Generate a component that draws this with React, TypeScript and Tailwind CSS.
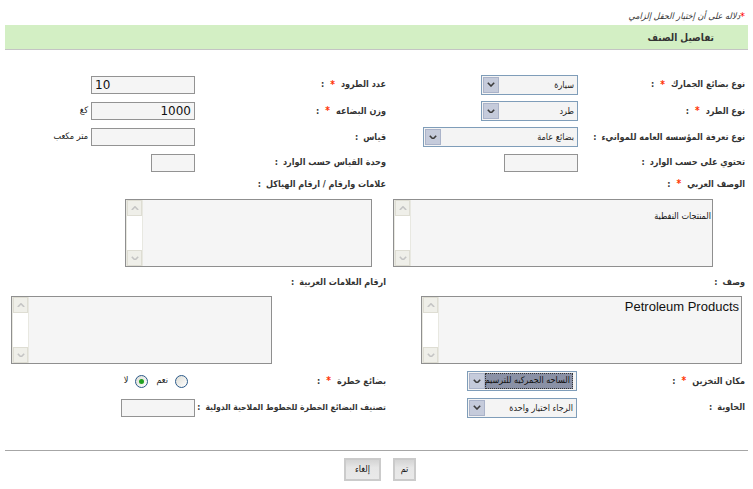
import React from "react";

const F = { fontFamily: '"DejaVu Sans", "Noto Sans", sans-serif' };
const FC = { fontFamily: '"DejaVu Sans Condensed", "DejaVu Sans", sans-serif' };

function Chevron({ up = false, color = "#333", w = 8 }: { up?: boolean; color?: string; w?: number }) {
  return (
    <svg width={w} height={w * 0.6} viewBox="0 0 10 6">
      <path d={up ? "M1 5 L5 1 L9 5" : "M1 1 L5 5 L9 1"} fill="none" stroke={color} strokeWidth={2} />
    </svg>
  );
}

function Label({ text, req = false, small = false }: { text: string; req?: boolean; small?: boolean }) {
  return (
    <div className={`flex items-center ${small ? "text-[8.5px]" : "text-[9px]"} font-bold text-[#333] whitespace-nowrap leading-none`} style={FC}>
      <span>{text}</span>
      {req && <span className="text-[#ff3300] text-[10px] mr-[6px]">*</span>}
      <span className={req ? "mr-[6px]" : "mr-[5px]"}>:</span>
    </div>
  );
}

function Select({ w, text, focus = false }: { w: string; text: string; focus?: boolean }) {
  return (
    <div className={`${w} h-[20px] border border-[#7f9db9] bg-[#f4f4f4] flex items-stretch p-px`}>
      <div className="flex-1 flex items-center justify-start pr-[2px] overflow-hidden">
        {focus ? (
          <span className="h-full w-full flex items-center bg-[#8a91a6] border border-dotted border-[#333] text-[9px] text-[#111] pr-[2px] whitespace-nowrap" style={FC}>{text}</span>
        ) : (
          <span className="text-[9px] text-[#222] whitespace-nowrap pt-[2px]" style={FC}>{text}</span>
        )}
      </div>
      <div className="w-[16px] bg-[#c5cbdb] border border-[#aab3c9] flex items-center justify-center">
        <Chevron color="#3c3c3c" w={8} />
      </div>
    </div>
  );
}

function Input({ w, value, align = "right" }: { w: string; value?: string; align?: "left" | "right" }) {
  return (
    <div
      dir="ltr"
      className={`${w} h-[18px] border border-[#939393] bg-[#f5f5f5] flex items-center px-[3px] text-[12px] text-[#111] ${align === "left" ? "justify-start" : "justify-end"}`}
    >
      {value}
    </div>
  );
}

function TextArea({ w, children, mr }: { w: string; children?: React.ReactNode; mr: string }) {
  return (
    <div className={`${w} ${mr} h-[68px] border border-[#8f8f8f] bg-[#f5f5f5] flex`}>
      <div className="flex-1 pr-[1px] pt-[2px] overflow-hidden">{children}</div>
      <div className="w-[17px] h-full bg-white border-x border-[#e8e8e1] flex flex-col justify-between">
        <div className="h-[16px] bg-[#efefe9] border border-[#deddd3] flex items-center justify-center">
          <Chevron up color="#c4c4c4" w={8} />
        </div>
        <div className="h-[16px] bg-[#efefe9] border border-[#deddd3] flex items-center justify-center">
          <Chevron color="#c4c4c4" w={8} />
        </div>
      </div>
    </div>
  );
}

function Radio({ checked = false }: { checked?: boolean }) {
  return (
    <span className="w-[13px] h-[13px] rounded-full border border-[#2b5a8a] bg-[linear-gradient(135deg,#dcdcd5,#ffffff)] flex items-center justify-center">
      {checked && <span className="w-[5px] h-[5px] rounded-full bg-[#21a121]" />}
    </span>
  );
}

export default function App() {
  return (
    <div className="w-[753px] h-[489px] bg-white overflow-hidden text-[#333]" style={F}>
      <div dir="rtl" className="h-[25px] pr-[8px] flex items-center pt-[9px]" style={FC}>
        <span className="text-[#ff0000] text-[11px] italic">*</span>
        <span className="text-[9px] italic text-[#333]">دلاله على أن إختيار الحقل إلزامي</span>
      </div>
      <div dir="rtl" className="mx-[5px] h-[24px] bg-[#d3efc4] flex items-center pr-[34px]">
        <span className="text-[10px] font-bold text-[#333]" style={FC}>تفاصيل الصنف</span>
      </div>
      <div className="mx-[5px] h-px bg-[#c4c4c4]" />

      <div dir="rtl" className="mt-[21px] pr-[8px] grid grid-cols-[167px_192px_191px_195px]">
        {/* row 1 */}
        <div className="h-[27px] flex items-center"><Label text="نوع بضائع الجمارك" req /></div>
        <div className="h-[27px] flex items-center"><Select w="w-[97px]" text="سيارة" /></div>
        <div className="h-[27px] flex items-center"><Label text="عدد الطرود" req /></div>
        <div className="h-[27px] flex items-center"><Input w="w-[104px]" value="10" align="left" /></div>

        {/* row 2 */}
        <div className="h-[26px] flex items-center"><Label text="نوع الطرد" req /></div>
        <div className="h-[26px] flex items-center"><Select w="w-[97px]" text="طرد" /></div>
        <div className="h-[26px] flex items-center"><Label text="وزن البضاعه" req /></div>
        <div className="h-[26px] flex items-center gap-[3px]">
          <Input w="w-[104px]" value="1000" />
          <span className="text-[9px] text-[#222]" style={FC}>كغ</span>
        </div>

        {/* row 3 */}
        <div className="h-[26px] flex items-center"><Label text="نوع تعرفة المؤسسه العامه للموانيء" /></div>
        <div className="h-[26px] flex items-center"><Select w="w-[155px]" text="بضائع عامة" /></div>
        <div className="h-[26px] flex items-center"><Label text="قياس" /></div>
        <div className="h-[26px] flex items-center gap-[3px]">
          <Input w="w-[104px]" />
          <span className="text-[9px] text-[#222] whitespace-nowrap" style={FC}>متر مكعب</span>
        </div>

        {/* row 4 */}
        <div className="h-[25px] flex items-center"><Label text="تحتوي على حسب الوارد" /></div>
        <div className="h-[25px] flex items-center"><Input w="w-[74px]" /></div>
        <div className="h-[25px] flex items-center"><Label text="وحدة القياس حسب الوارد" /></div>
        <div className="h-[25px] flex items-center"><Input w="w-[44px]" /></div>

        {/* row 5 labels */}
        <div className="col-span-2 h-[18px] flex items-center"><Label text="الوصف العربي" req /></div>
        <div className="col-span-2 h-[18px] flex items-center"><Label text="علامات وارقام / ارقام الهياكل" /></div>

        {/* row 6 textareas */}
        <div className="col-span-2 mt-[6px] flex">
          <TextArea w="w-[320px]" mr="mr-[32px]">
            <span className="text-[9px] text-[#111]" style={FC}>المنتجات النفطية</span>
          </TextArea>
        </div>
        <div className="col-span-2 mt-[6px] flex">
          <TextArea w="w-[247px]" mr="mr-[14px]" />
        </div>

        {/* row 7 labels */}
        <div className="col-span-2 mt-[6px] h-[18px] flex items-center"><Label text="وصف" /></div>
        <div className="col-span-2 mt-[6px] h-[18px] flex items-center"><Label text="ارقام العلامات العربية" /></div>

        {/* row 8 textareas */}
        <div className="col-span-2 mt-[5px] flex">
          <TextArea w="w-[321px]" mr="mr-[3px]">
            <div dir="ltr" className="text-right pr-[1px] text-[13px] text-[#111] leading-[16px]" style={{ fontFamily: '"Liberation Sans", sans-serif' }}>
              Petroleum Products
            </div>
          </TextArea>
        </div>
        <div className="col-span-2 mt-[5px] flex">
          <TextArea w="w-[261px]" mr="mr-[114px]" />
        </div>

        {/* row 9 */}
        <div className="mt-[4px] h-[26px] flex items-center"><Label text="مكان التخزين" req /></div>
        <div className="mt-[4px] h-[26px] flex items-center"><div className="mr-[1px]"><Select w="w-[110px]" text="الساحه الجمركيه للترسيم" focus /></div></div>
        <div className="mt-[4px] h-[26px] flex items-center"><Label text="بضائع خطرة" req /></div>
        <div className="mt-[4px] h-[26px] flex items-center pr-[7px] text-[9px] text-[#222]" style={FC}>
          <Radio />
          <span className="mr-[7px]">نعم</span>
          <span className="mr-[8px]"><Radio checked /></span>
          <span className="mr-[7px]">لا</span>
        </div>

        {/* row 10 */}
        <div className="h-[27px] flex items-center"><Label text="الحاوية" /></div>
        <div className="h-[27px] flex items-center"><div className="mr-[1px]"><Select w="w-[110px]" text="الرجاء اختيار واحدة" /></div></div>
        <div className="h-[27px] flex items-center"><Label text="تصنيف البضائع الخطرة للخطوط الملاحية الدولية" small /></div>
        <div className="h-[27px] flex items-center"><Input w="w-[74px]" /></div>
      </div>

      <div className="mt-[29px] mx-[5px] h-px bg-[#a6a6a6]" />
      <div dir="rtl" className="mt-[7px] flex justify-center gap-[12px] pl-[7px]" style={FC}>
        <button className="w-[23px] h-[23px] border-2 border-[#cbcbcb] bg-[linear-gradient(#d4d4d4,#e6e6e6_40%,#e9e9e9)] text-[9px] text-[#111] flex items-center justify-center">تم</button>
        <button className="w-[37px] h-[23px] border-2 border-[#cbcbcb] bg-[linear-gradient(#d4d4d4,#e6e6e6_40%,#e9e9e9)] text-[9px] text-[#111] flex items-center justify-center">إلغاء</button>
      </div>
    </div>
  );
}
